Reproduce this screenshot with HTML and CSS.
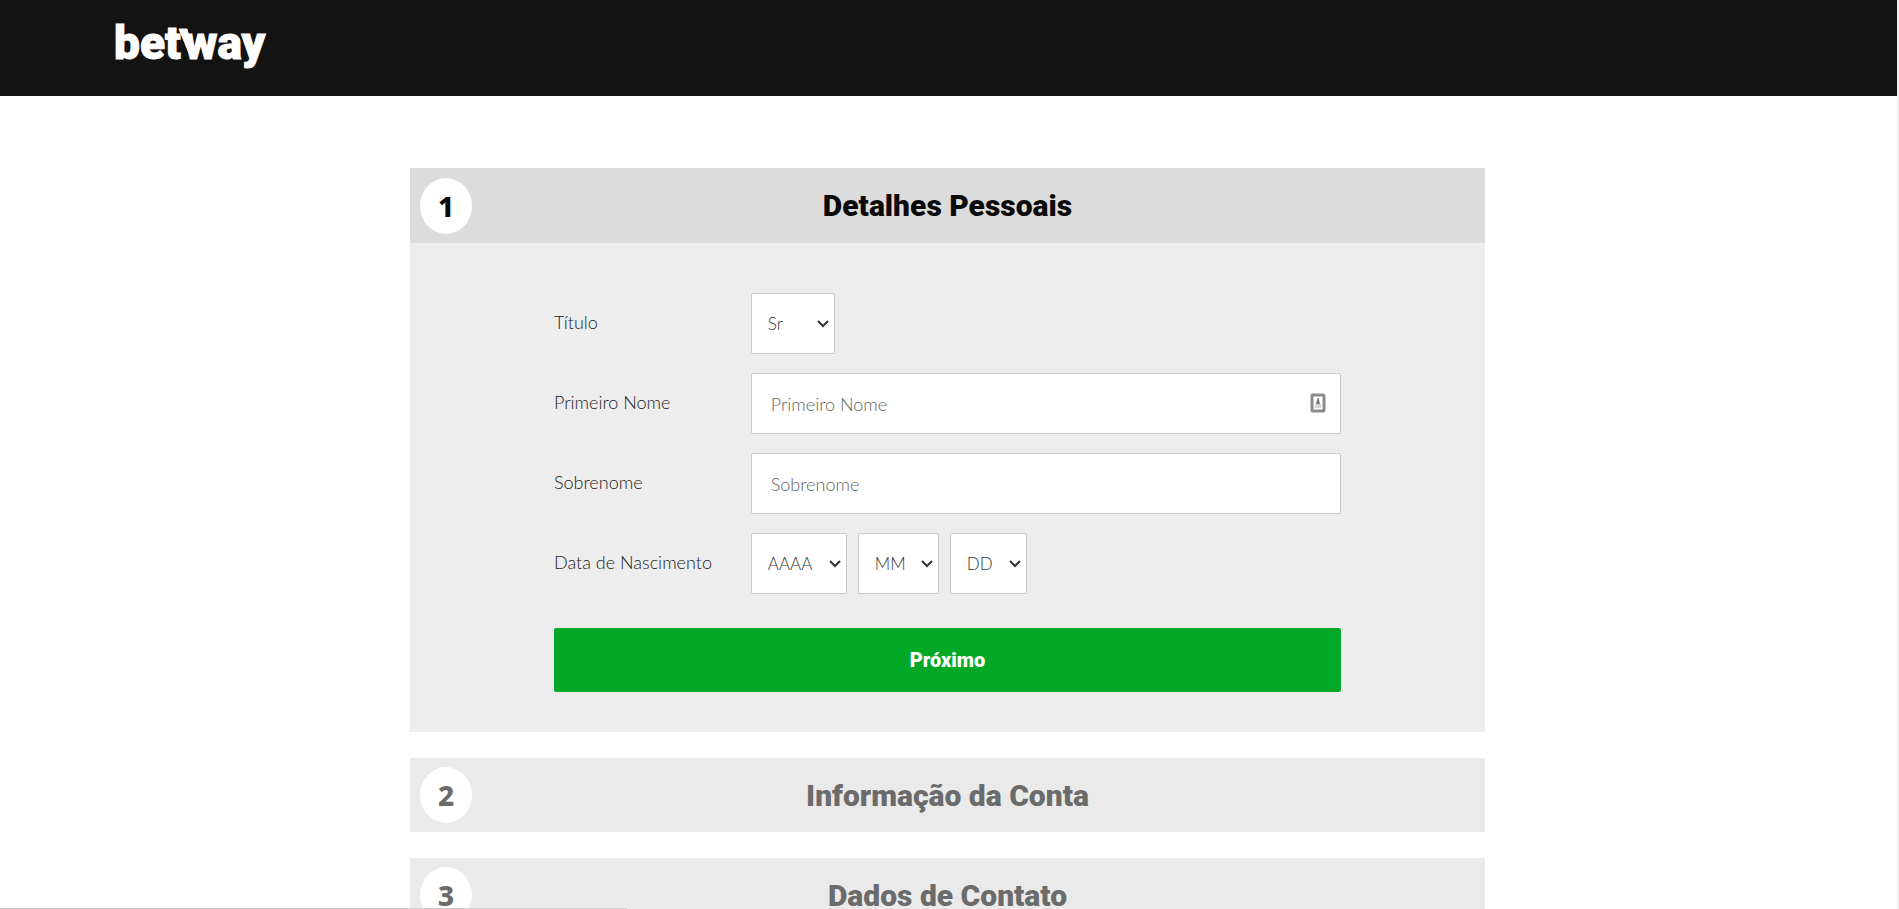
FILE: index.html
```html
<!DOCTYPE html>
<html lang="pt-BR">
<head>
    <meta charset="UTF-8">
    <meta name="viewport" content="width=device-width, initial-scale=1.0">
    <title>betway - Registro</title>
    <link rel="stylesheet" href="styles.css">
</head>
<body>

    <header class="topbar">
        <a href="#" class="logo" aria-label="betway">
            <svg width="160" height="76" viewBox="0 0 160 76">
                <text x="0" y="48">bet</text>
                <text x="70" y="48">way</text>
                <path d="M65 18h8l6 24h-4z"/>
            </svg>
        </a>
    </header>

    <main class="steps">
        <section class="step active">
            <div class="step-header">
                <span class="step-number">1</span>
                <h2>Detalhes Pessoais</h2>
            </div>
            <form class="step-body">
                <div class="form-group">
                    <label for="titulo">Título</label>
                    <select id="titulo" class="titulo">
                        <option selected>Sr</option>
                        <option>Sra</option>
                    </select>
                </div>
                <div class="form-group">
                    <label for="nome">Primeiro Nome</label>
                    <div class="input-box">
                        <input type="text" id="nome" placeholder="Primeiro Nome">
                        <svg class="fill-icon" width="16" height="20" viewBox="0 0 16 20">
                            <rect x="2" y="2" width="12" height="16" rx="1" fill="#fff" stroke="#8c8c8c" stroke-width="3"/>
                            <circle cx="8" cy="6" r="1" fill="#777"/>
                            <path d="M7 7h2l1 4H6z" fill="#777"/>
                            <path d="M5 12h6M5 14h6" stroke="#aaa"/>
                        </svg>
                    </div>
                </div>
                <div class="form-group">
                    <label for="sobrenome">Sobrenome</label>
                    <div class="input-box">
                        <input type="text" id="sobrenome" placeholder="Sobrenome">
                    </div>
                </div>
                <div class="form-group">
                    <label for="ano">Data de Nascimento</label>
                    <div class="date-group">
                        <select id="ano" class="ano"><option>AAAA</option></select>
                        <select class="mes" aria-label="Mês"><option>MM</option></select>
                        <select class="dia" aria-label="Dia"><option>DD</option></select>
                    </div>
                </div>
                <button type="button">Próximo</button>
            </form>
        </section>

        <section class="step">
            <div class="step-header">
                <span class="step-number">2</span>
                <h2>Informação da Conta</h2>
            </div>
        </section>

        <section class="step">
            <div class="step-header">
                <span class="step-number">3</span>
                <h2>Dados de Contato</h2>
            </div>
        </section>
    </main>

    <div class="status-line"></div>

</body>
</html>
```

FILE: styles.css
```css
* {
    box-sizing: border-box;
}
html {
    border-right: 2px solid #efefef;
    scrollbar-width: none;
}
body {
    margin: 0;
    padding-right: 2px;
    font-family: Lato, sans-serif;
    font-size: 18px;
    font-weight: 300;
    color: #222;
    background: #fff;
}
.topbar {
    height: 96px;
    margin-right: -2px;
    padding: 11px 6%;
    background: #131313;
}
.logo {
    display: inline-block;
}
.logo svg {
    display: block;
    fill: #fff;
    stroke: #fff;
    stroke-width: 1px;
    font-family: Roboto, sans-serif;
    font-size: 46px;
    font-weight: 900;
}
.steps {
    width: 92%;
    max-width: 1075px;
    margin: 72px auto 40px;
}
.step {
    margin-bottom: 26px;
    background: #ededed;
}
.step-header {
    display: flex;
    align-items: center;
    height: 74px;
    padding: 0 10px;
    background: #eaeaea;
    color: #6b6b6b;
}
.active .step-header {
    height: 75px;
    background: #dcdcdc;
    color: #0a0a0a;
}
.step-number {
    display: flex;
    align-items: center;
    justify-content: center;
    width: 52px;
    height: 56px;
    border-radius: 50%;
    background: #fff;
    font-family: "Noto Sans", sans-serif;
    font-size: 28px;
    font-weight: 800;
}
.step-header h2 {
    flex: 1;
    margin: 0 52px 0 0;
    text-align: center;
    font-family: Roboto, sans-serif;
    font-size: 30px;
    font-weight: 900;
}
.step-body {
    padding: 50px 144px 40px;
}
.form-group {
    display: flex;
    align-items: center;
    margin-bottom: 19px;
}
label {
    width: 25%;
    padding-bottom: 3px;
}
.input-box {
    position: relative;
    flex: 1;
}
input, select {
    height: 61px;
    border: 1px solid #c8c8c8;
    border-radius: 2px;
    background-color: #fff;
    font-family: inherit;
    font-size: 18px;
    font-weight: 300;
    color: #333;
}
input {
    display: block;
    width: 100%;
    padding: 0 52px 0 19px;
}
input::placeholder {
    color: #666;
}
select {
    appearance: none;
    padding: 0 20px 0 16px;
    font-size: 17px;
    background-image: url("data:image/svg+xml,%3Csvg xmlns='http://www.w3.org/2000/svg' width='12' height='8'%3E%3Cpath d='M1 1l5 5 5-5' fill='none' stroke='%23333' stroke-width='2'/%3E%3C/svg%3E");
    background-repeat: no-repeat;
    background-position: right 5px center;
}
.titulo {
    width: 84px;
}
.ano {
    width: 96px;
}
.mes {
    width: 81px;
}
.dia {
    width: 77px;
}
.date-group {
    display: flex;
    gap: 11px;
}
.fill-icon {
    position: absolute;
    top: 20px;
    right: 15px;
}
button {
    display: block;
    width: 100%;
    height: 64px;
    margin-top: 34px;
    border: none;
    border-radius: 2px;
    background: #02a826;
    color: #fff;
    font-family: Roboto, sans-serif;
    font-size: 20px;
    font-weight: 900;
    cursor: pointer;
}
/* loading line along the bottom of the window */
.status-line {
    position: fixed;
    left: 0;
    bottom: 0;
    width: 33%;
    height: 1px;
    background: #cfcfcf;
}
```
